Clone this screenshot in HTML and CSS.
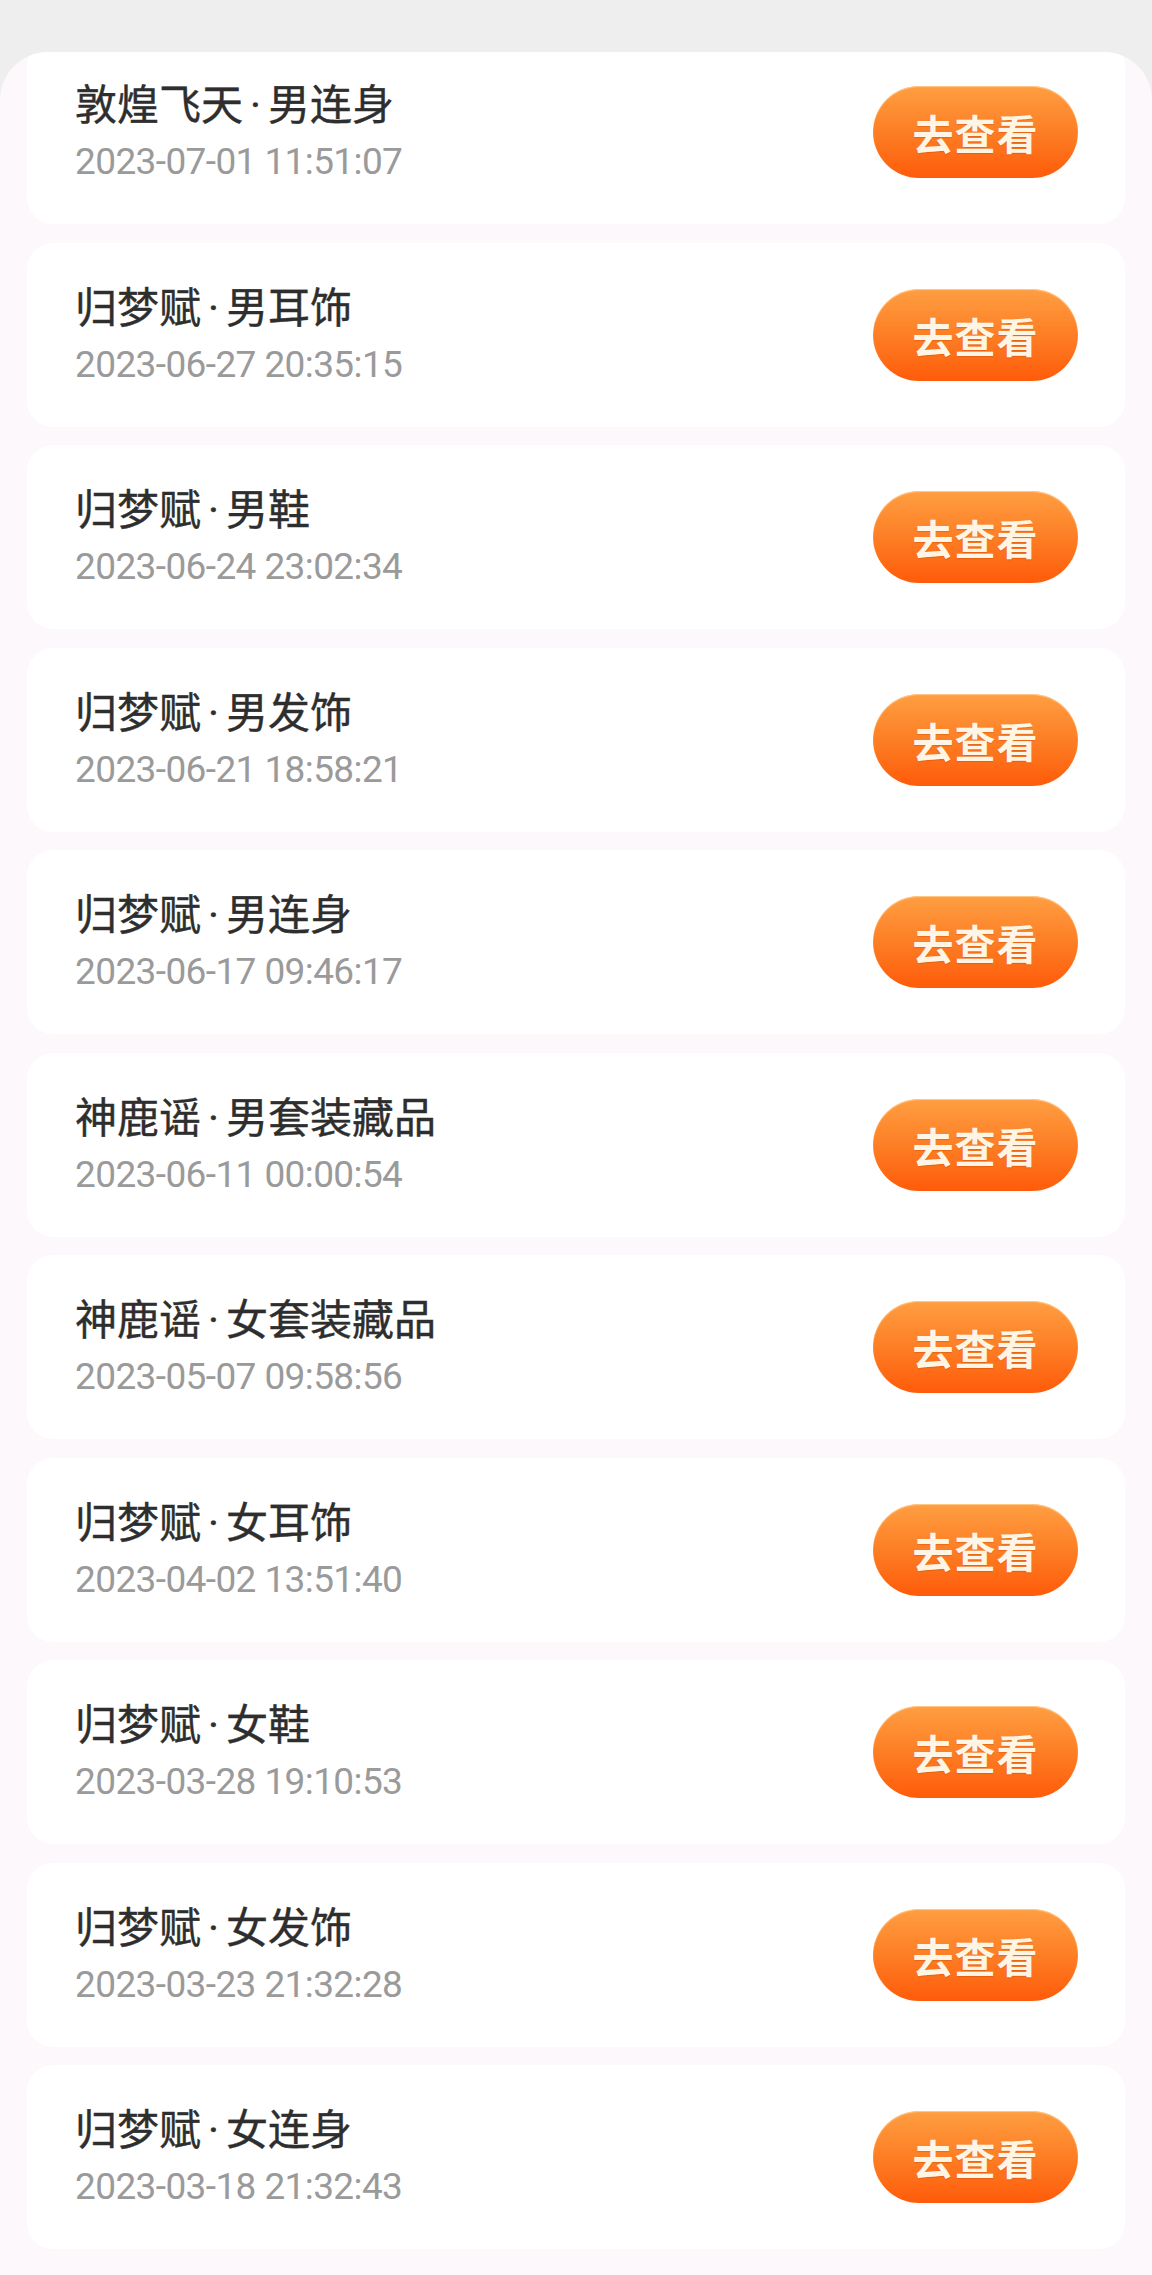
FILE: index.html
```html
<!DOCTYPE html>
<html lang="zh-CN">
<head>
    <meta charset="UTF-8">
    <meta name="viewport" content="width=device-width, initial-scale=1.0">
    <title>藏品记录</title>
    <link rel="stylesheet" href="styles.css">
</head>
<body>
    <div class="topbar"></div>

    <div class="sheet">
        <ul class="record-list">
            <li class="record">
                <div class="record-info">
                    <div class="record-name">敦煌飞天<span class="sep">·</span>男连身</div>
                    <div class="record-time">2023-07-01 11:51:07</div>
                </div>
                <button class="view-btn">去查看</button>
            </li>
            <li class="record">
                <div class="record-info">
                    <div class="record-name">归梦赋<span class="sep">·</span>男耳饰</div>
                    <div class="record-time">2023-06-27 20:35:15</div>
                </div>
                <button class="view-btn">去查看</button>
            </li>
            <li class="record">
                <div class="record-info">
                    <div class="record-name">归梦赋<span class="sep">·</span>男鞋</div>
                    <div class="record-time">2023-06-24 23:02:34</div>
                </div>
                <button class="view-btn">去查看</button>
            </li>
            <li class="record">
                <div class="record-info">
                    <div class="record-name">归梦赋<span class="sep">·</span>男发饰</div>
                    <div class="record-time">2023-06-21 18:58:21</div>
                </div>
                <button class="view-btn">去查看</button>
            </li>
            <li class="record">
                <div class="record-info">
                    <div class="record-name">归梦赋<span class="sep">·</span>男连身</div>
                    <div class="record-time">2023-06-17 09:46:17</div>
                </div>
                <button class="view-btn">去查看</button>
            </li>
            <li class="record">
                <div class="record-info">
                    <div class="record-name">神鹿谣<span class="sep">·</span>男套装藏品</div>
                    <div class="record-time">2023-06-11 00:00:54</div>
                </div>
                <button class="view-btn">去查看</button>
            </li>
            <li class="record">
                <div class="record-info">
                    <div class="record-name">神鹿谣<span class="sep">·</span>女套装藏品</div>
                    <div class="record-time">2023-05-07 09:58:56</div>
                </div>
                <button class="view-btn">去查看</button>
            </li>
            <li class="record">
                <div class="record-info">
                    <div class="record-name">归梦赋<span class="sep">·</span>女耳饰</div>
                    <div class="record-time">2023-04-02 13:51:40</div>
                </div>
                <button class="view-btn">去查看</button>
            </li>
            <li class="record">
                <div class="record-info">
                    <div class="record-name">归梦赋<span class="sep">·</span>女鞋</div>
                    <div class="record-time">2023-03-28 19:10:53</div>
                </div>
                <button class="view-btn">去查看</button>
            </li>
            <li class="record">
                <div class="record-info">
                    <div class="record-name">归梦赋<span class="sep">·</span>女发饰</div>
                    <div class="record-time">2023-03-23 21:32:28</div>
                </div>
                <button class="view-btn">去查看</button>
            </li>
            <li class="record">
                <div class="record-info">
                    <div class="record-name">归梦赋<span class="sep">·</span>女连身</div>
                    <div class="record-time">2023-03-18 21:32:43</div>
                </div>
                <button class="view-btn">去查看</button>
            </li>
        </ul>
    </div>
</body>
</html>
```

FILE: styles.css
```css
body {
    margin: 0;
    background: #eeeeee;
    font-family: "Noto Sans CJK SC", "Noto Sans", sans-serif;
}
.topbar {
    height: 52px;
}
.sheet {
    background: #fcf8fc;
    border-radius: 48px 48px 0 0;
    overflow: hidden;
    padding-bottom: 60px;
}
/* list is scrolled a little, first card slides under the top edge */
.record-list {
    list-style: none;
    margin: -12px 0 0;
    padding: 0;
}
.record {
    display: flex;
    align-items: center;
    justify-content: space-between;
    height: 184px;
    box-sizing: border-box;
    margin: 0 27px 18.5px;
    padding: 0 47px 0 48px;
    background: #ffffff;
    border-radius: 26px;
}
.record-name {
    font-size: 42px;
    line-height: 56px;
    font-weight: 400;
    color: #2e2e2e;
    -webkit-text-stroke: 0.4px #2e2e2e;
}
.record-name .sep {
    font-family: Roboto, sans-serif;
    margin: 0 7px;
}
.record-time {
    font-family: Roboto, "Liberation Sans", sans-serif;
    font-size: 37px;
    line-height: 56px;
    letter-spacing: -0.6px;
    color: #9a9a9a;
}
.view-btn {
    width: 205px;
    height: 92px;
    border: none;
    border-radius: 46px;
    background: linear-gradient(180deg, #ff9e42 0%, #fd7b22 55%, #ff5b0a 100%);
    box-shadow: inset 0 1px 1px rgba(255, 214, 160, 0.8);
    color: #fff5e4;
    font-family: "Noto Sans CJK SC", sans-serif;
    font-size: 41px;
    font-weight: 700;
    letter-spacing: 1px;
    text-shadow: 0 1px 1px rgba(190, 70, 0, 0.35);
    cursor: pointer;
}
```
